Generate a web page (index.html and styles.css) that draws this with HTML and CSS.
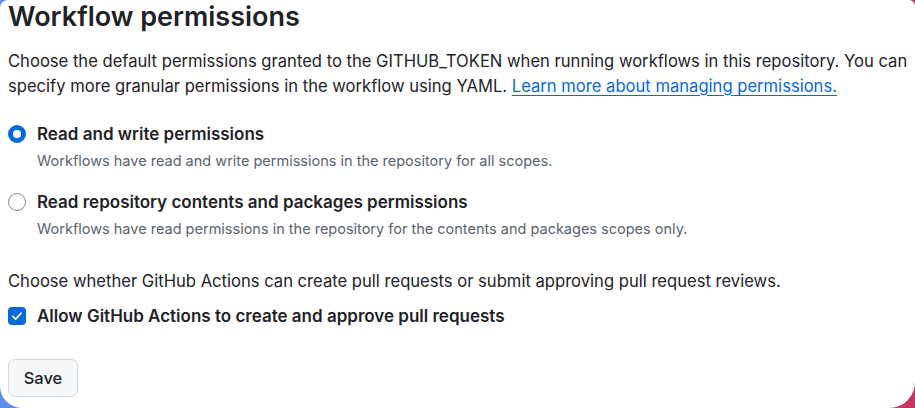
FILE: index.html
```html
<!DOCTYPE html>
<html lang="en">
<head>
  <meta charset="UTF-8">
  <title>Actions permissions</title>
  <meta name="viewport" content="width=device-width, initial-scale=1.0">
  <link rel="stylesheet" href="styles.css">
</head>
<body>
  <div class="settings-card">
    <h2 class="subhead-heading">Workflow permissions</h2>

    <p class="settings-text">
      <span>Choose the default permissions granted to the GITHUB_TOKEN when running workflows in this repository. You can</span>
      <span>specify more granular permissions in the workflow using YAML.</span> <a href="#" class="settings-link">Learn more about managing permissions.</a>
    </p>

    <div class="option-list">
      <label class="option-item">
        <div class="option-row">
          <span class="radio-mark checked"></span>
          <span class="option-label">Read and write permissions</span>
        </div>
        <div class="option-note">Workflows have read and write permissions in the repository for all scopes.</div>
      </label>

      <label class="option-item">
        <div class="option-row">
          <span class="radio-mark"></span>
          <span class="option-label">Read repository contents and packages permissions</span>
        </div>
        <div class="option-note">Workflows have read permissions in the repository for the contents and packages scopes only.</div>
      </label>
    </div>

    <p class="settings-text pr-text">Choose whether GitHub Actions can create pull requests or submit approving pull request reviews.</p>

    <label class="option-row check-row">
      <span class="check-mark">
        <svg width="12" height="12" viewBox="0 0 16 16"><path d="M2.5 8.5l3.6 3.6L13.5 4.2" fill="none" stroke="#fff" stroke-width="2.2" stroke-linecap="round" stroke-linejoin="round"/></svg>
      </span>
      <span class="option-label">Allow GitHub Actions to create and approve pull requests</span>
    </label>

    <button class="save-btn">Save</button>
  </div>
</body>
</html>
```

FILE: styles.css
```css
body {
  margin: 0;
  height: 408px;
  overflow: hidden;
  background: linear-gradient(90deg, #5a8ee6 0%, #7f6fc0 40%, #b04a86 75%, #c8355e 100%);
  font-family: Inter, 'Liberation Sans', Arial, sans-serif;
  color: #1f2328;
}

.settings-card {
  background: #fff;
  height: 408px;
  box-sizing: border-box;
  padding: 0 2px 0 8px;
  border-radius: 8px 6px 26px 22px;
}

.subhead-heading {
  margin: 0;
  font-size: 27px;
  line-height: 34px;
  font-weight: 600;
}

.settings-text {
  margin: 15px 0 0;
  font-size: 16.6px;
  line-height: 25px;
}

.settings-link {
  color: #0969da;
  text-decoration: underline;
  text-underline-offset: 3px;
}

.option-list {
  margin-top: 23px;
  display: flex;
  flex-direction: column;
  gap: 19px;
}

.option-item {
  display: block;
}

.option-row {
  display: flex;
  align-items: center;
  gap: 11px;
  line-height: 24px;
}

.option-label {
  font-size: 17px;
  font-weight: 600;
}

.option-note {
  margin: 5px 0 0 29px;
  font-size: 14.5px;
  line-height: 20px;
  color: #59636e;
}

.radio-mark {
  width: 18px;
  height: 18px;
  box-sizing: border-box;
  border: 1px solid #818b98;
  border-radius: 50%;
  background: #fff;
  flex-shrink: 0;
}

.radio-mark.checked {
  border: 5px solid #0969da;
}

.pr-text {
  margin-top: 30px;
}

.check-row {
  margin-top: 10px;
}

.check-mark {
  width: 18px;
  height: 18px;
  border-radius: 4px;
  background: #0969da;
  display: flex;
  align-items: center;
  justify-content: center;
  flex-shrink: 0;
}

.save-btn {
  display: block;
  margin-top: 31px;
  width: 70px;
  height: 38px;
  background: #f6f8fa;
  border: 1px solid #d1d9e0;
  border-radius: 7px;
  font-family: inherit;
  font-size: 16.5px;
  font-weight: 500;
  color: #1f2328;
}
```
